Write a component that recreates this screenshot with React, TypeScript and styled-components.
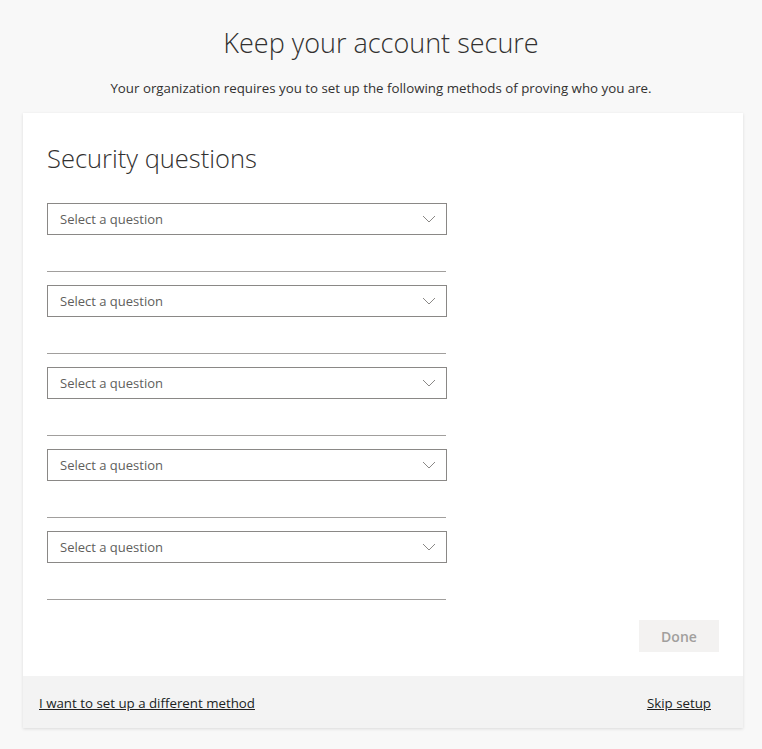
import React from 'react';
import styled, { createGlobalStyle } from 'styled-components';

const GlobalStyle = createGlobalStyle`
  html, body {
    margin: 0;
    padding: 0;
    background: #f8f8f8;
    font-family: 'Open Sans', 'Noto Sans', sans-serif;
    color: #323130;
  }
`;

const QUESTION_COUNT = 5;

const Page = styled.div`
  width: 762px;
  min-height: 749px;
  padding-top: 23px;
  box-sizing: border-box;
`;

const Title = styled.h1`
  margin: 0;
  text-align: center;
  font-size: 27px;
  font-weight: 300;
  line-height: 40px;
  color: #323130;
`;

const Subtitle = styled.p`
  margin: 15px 0 0;
  text-align: center;
  font-size: 13.3px;
  line-height: 20px;
  color: #323130;
`;

const Card = styled.div`
  margin: 15px 0 0 23px;
  width: 720px;
  background: #fff;
  box-shadow: 0 1px 3px rgba(0, 0, 0, 0.12);
`;

const Body = styled.div`
  display: flex;
  flex-direction: column;
  padding: 26px 24px 24px;
`;

const Heading = styled.h2`
  margin: 0 0 26px;
  font-size: 25.5px;
  font-weight: 300;
  line-height: 38px;
  color: #323130;
`;

const Questions = styled.div`
  display: flex;
  flex-direction: column;
  gap: 13px;
`;

const QuestionGroup = styled.div`
  display: flex;
  flex-direction: column;
  width: 400px;
`;

const Select = styled.div`
  display: flex;
  align-items: center;
  justify-content: space-between;
  height: 32px;
  box-sizing: border-box;
  padding: 0 10px 0 12px;
  border: 1px solid #8a8886;
  font-size: 13px;
  color: #605e5c;
  cursor: pointer;
`;

const Answer = styled.div`
  height: 36px;
  border-bottom: 1px solid #a19f9d;
  width: 399px;
`;

const Actions = styled.div`
  display: flex;
  justify-content: flex-end;
  margin-top: 20px;
`;

const DoneButton = styled.button`
  width: 80px;
  height: 32px;
  border: none;
  background: #f3f2f1;
  color: #a19f9d;
  font-family: inherit;
  font-size: 14px;
  font-weight: 600;
`;

const Footer = styled.div`
  display: flex;
  align-items: center;
  justify-content: space-between;
  height: 52px;
  padding: 2px 32px 0 16px;
  box-sizing: border-box;
  background: #f3f3f3;
`;

const FooterLink = styled.a`
  font-size: 13.3px;
  color: #201f1e;
  text-decoration: underline;
  cursor: pointer;
`;

const Chevron = () => (
  <svg width="14" height="8" viewBox="0 0 14 8" fill="none">
    <path d="M1 1l6 6 6-6" stroke="#8a8886" strokeWidth="1" />
  </svg>
);

const App = () => (
  <>
    <GlobalStyle />
    <Page>
      <Title>Keep your account secure</Title>
      <Subtitle>Your organization requires you to set up the following methods of proving who you are.</Subtitle>
      <Card>
        <Body>
          <Heading>Security questions</Heading>
          <Questions>
            {Array.from({ length: QUESTION_COUNT }).map((_, i) => (
              <QuestionGroup key={i}>
                <Select>
                  Select a question
                  <Chevron />
                </Select>
                <Answer />
              </QuestionGroup>
            ))}
          </Questions>
          <Actions>
            <DoneButton disabled>Done</DoneButton>
          </Actions>
        </Body>
        <Footer>
          <FooterLink>I want to set up a different method</FooterLink>
          <FooterLink>Skip setup</FooterLink>
        </Footer>
      </Card>
    </Page>
  </>
);

export default App;
